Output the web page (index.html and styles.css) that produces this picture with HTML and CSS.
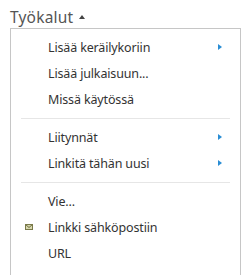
FILE: index.html
```html
<!DOCTYPE html>
<html lang="fi">
<head>
<meta charset="utf-8">
<link rel="stylesheet" href="styles.css">
</head>
<body>
<div class="tools">
  <div class="title">Työkalut <span class="caret"></span></div>
  <ul class="menu">
    <li class="item"><span class="icon"></span><span class="label">Lisää keräilykoriin</span><span class="arrow"></span></li>
    <li class="item"><span class="icon"></span><span class="label">Lisää julkaisuun...</span></li>
    <li class="item"><span class="icon"></span><span class="label">Missä käytössä</span></li>
    <li class="sep"></li>
    <li class="item"><span class="icon"></span><span class="label">Liitynnät</span><span class="arrow"></span></li>
    <li class="item"><span class="icon"></span><span class="label">Linkitä tähän uusi</span><span class="arrow"></span></li>
    <li class="sep"></li>
    <li class="item"><span class="icon"></span><span class="label">Vie...</span></li>
    <li class="item"><span class="icon"><svg width="8" height="6" viewBox="0 0 8 6"><rect x="0" y="0" width="8" height="6" fill="#d8d8b0"/><path d="M0 0 L4 3.5 L8 0" fill="none" stroke="#6b6b3a" stroke-width="1"/><rect x="0.5" y="0.5" width="7" height="5" fill="none" stroke="#7a7a4a" stroke-width="1"/></svg></span><span class="label">Linkki sähköpostiin</span></li>
    <li class="item"><span class="icon"></span><span class="label">URL</span></li>
  </ul>
</div>
</body>
</html>
```

FILE: styles.css
```css
html, body {
  margin: 0;
  padding: 0;
  background: #ffffff;
}
body {
  font-family: "Noto Sans", "Open Sans", sans-serif;
  color: #333333;
}
.tools {
  padding: 6px 5px 0 10px;
}
.title {
  font-size: 15.5px;
  line-height: 18px;
  color: #555555;
  height: 22px;
  display: flex;
  align-items: center;
  gap: 6px;
  letter-spacing: 0.2px;
}
.caret {
  width: 0;
  height: 0;
  border-left: 3.5px solid transparent;
  border-right: 3.5px solid transparent;
  border-bottom: 4px solid #444444;
  margin-top: 0;
}
.menu {
  list-style: none;
  margin: 0;
  padding: 5px 0 10px 0;
  border: 1px solid #c6c6c6;
  width: 229px;
  box-sizing: content-box;
}
.item {
  display: flex;
  align-items: center;
  height: 26px;
  font-size: 12.5px;
  letter-spacing: -0.15px;
}
.icon {
  width: 37px;
  display: flex;
  box-sizing: border-box;
  padding-left: 14px;
  justify-content: flex-start;
}
.label {
  flex: 1;
}
.arrow {
  width: 0;
  height: 0;
  border-top: 3.5px solid transparent;
  border-bottom: 3.5px solid transparent;
  border-left: 4px solid #2a8dd4;
  margin-right: 18px;
}
.sep {
  height: 1px;
  background: #e6e6e6;
  margin: 6px 10px 5px 10px;
}
```
